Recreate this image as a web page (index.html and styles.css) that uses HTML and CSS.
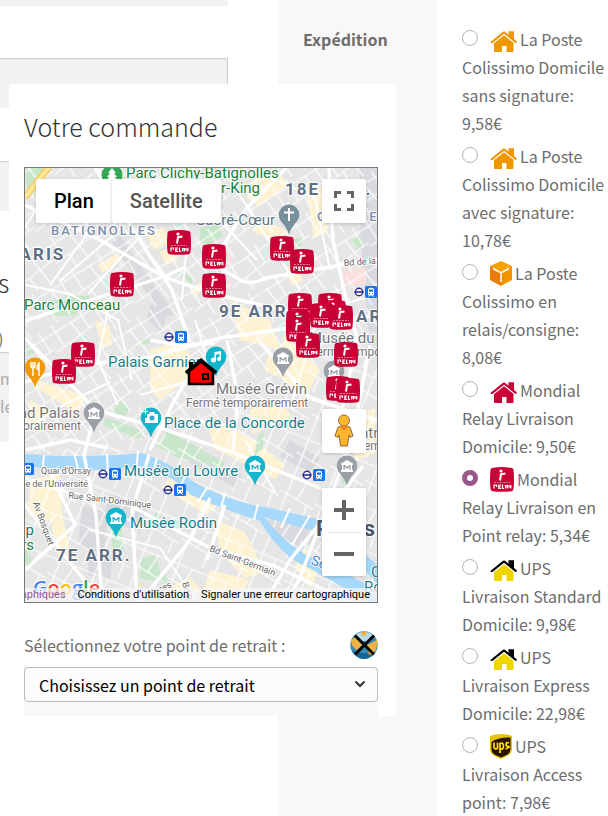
FILE: index.html
```html
<!DOCTYPE html>
<html lang="fr">
<head>
<meta charset="utf-8">
<title>Votre commande</title>
<meta name="viewport" content="width=device-width, initial-scale=1">
<link rel="stylesheet" href="styles.css">
</head>
<body>
<svg class="defs" aria-hidden="true">
  <symbol id="house" viewBox="0 0 27 21">
    <path class="roof" d="M1 10.500 13 .8q1-.8 2 0L18.500 3.800V.3H24V8L26.500 10Q27.500 11.500 25.500 12L14 2.800 2.500 12Q-.5 12.500 1 10.500Z"/>
    <path class="walls" d="M14 4.200 23.500 11.800V20Q23.500 21 22.500 21H16.500V15H12V21H5Q4 21 4 20V12.200Z"/>
  </symbol>
  <symbol id="relay" viewBox="0 0 24 25">
    <path fill="#c90036" d="M2 1Q12 -.8 22 1Q23.500 1.300 23.500 3Q24.500 12.500 23.500 22Q23.300 24 21.500 24.200Q12 25.500 2.500 24.200Q.7 24 .5 22Q-.5 12.500 .5 3Q.6 1.300 2 1Z"/>
    <circle cx="11" cy="4" r="1.600" fill="#fff"/>
    <path d="M15.500 6.500 11 7.200 10 13.500" fill="none" stroke="#fff" stroke-width="2"/>
    <path d="M4 15.500H20" stroke="#e87d9a" stroke-dasharray="2 1"/>
    <path d="M4 21.500V18H6.500V20M8.800 21.500V18H11M8.800 19.800H10.500M8.300 21.500H11M12.500 17.500V21.500H14M15.500 21.500V18.500H17.500V21.500M15.500 20H17.500M19 18V20H20.800V17.800M20.800 19.500V21.500" fill="none" stroke="#fff" stroke-width="1.200"/>
  </symbol>
  <symbol id="train" viewBox="0 0 26 12">
    <circle cx="6" cy="6" r="3.700" fill="#fff" stroke="#2b2f8f" stroke-width="1.400"/>
    <path d="M1.500 6H10.500" stroke="#2b2f8f" stroke-width="1.600"/>
    <use href="#tram" x="12" width="12" height="12"/>
  </symbol>
  <symbol id="tram" viewBox="0 0 12 12">
    <rect width="12" height="12" rx="1.500" fill="#1a73e8"/>
    <path fill="#fff" d="M3 3.500Q3 1.800 6 1.800T9 3.500V8Q9 9 8 9L9 10.500H7.800L7 9.500H5L4.200 10.500H3L4 9Q3 9 3 8Z"/>
    <path fill="#1a73e8" d="M4 3.500H8V5.800H4ZM4 7H5V8H4ZM7 7H8V8H7Z"/>
  </symbol>
  <symbol id="pin" viewBox="0 0 22 31">
    <path d="M11 .5A10.300 10.300 0 0 0 .7 10.800C.7 18 8 20 11 30.500C14 20 21.300 18 21.300 10.800A10.300 10.300 0 0 0 11 .5Z"/>
  </symbol>
  <symbol id="museum" viewBox="0 0 12 12">
    <path fill="#fff" fill-rule="evenodd" d="M6 0 12 3.500V4.800H11V10H12V12H0V10H1V4.800H0V3.500ZM2.500 5V10H3.700V7L6 9 8.300 7V10H9.500V5H8.300L6 7.200 3.700 5Z"/>
  </symbol>
</svg>

<main class="page">
  <form class="billing">
    <div class="field field-cut"></div>
    <div class="field"></div>
    <div class="field"></div>
    <h3 class="heading">s</h3>
    <p class="note">)</p>
    <div class="comments">m<br>le</div>
  </form>

  <table class="order">
    <tbody>
      <tr>
        <th scope="row">Expédition</th>
        <td>
          <ul class="methods">
            <li><input type="radio" name="shipping" id="m1"><label for="m1"><svg class="icon house orange"><use href="#house"/></svg>La Poste Colissimo Domicile sans signature: 9,58€</label></li>
            <li><input type="radio" name="shipping" id="m2"><label for="m2"><svg class="icon house orange"><use href="#house"/></svg>La Poste Colissimo Domicile avec signature: 10,78€</label></li>
            <li><input type="radio" name="shipping" id="m3"><label for="m3"><svg class="icon box" viewBox="0 0 22 25"><path fill="#f6a200" d="M11 0 22 5 11 11 0 5Z"/><path fill="#ed7d00" d="M0 5 11 11V25L0 19Z"/><path fill="#f39200" d="M22 5 11 11V25L22 19Z"/><path d="M3 7.500 11 12 19 7.500M11 12V21" fill="none" stroke="#fff" stroke-width="1.500"/></svg>La Poste Colissimo en relais/consigne: 8,08€</label></li>
            <li><input type="radio" name="shipping" id="m4"><label for="m4"><svg class="icon house crimson"><use href="#house"/></svg>Mondial Relay Livraison Domicile: 9,50€</label></li>
            <li><input type="radio" name="shipping" id="m5" checked><label for="m5"><svg class="icon relay"><use href="#relay"/></svg>Mondial Relay Livraison en Point relay: 5,34€</label></li>
            <li><input type="radio" name="shipping" id="m6"><label for="m6"><svg class="icon house yellow"><use href="#house"/></svg>UPS Livraison Standard Domicile: 9,98€</label></li>
            <li><input type="radio" name="shipping" id="m7"><label for="m7"><svg class="icon house yellow"><use href="#house"/></svg>UPS Livraison Express Domicile: 22,98€</label></li>
            <li><input type="radio" name="shipping" id="m8"><label for="m8"><svg class="icon box" viewBox="0 0 22 25"><path fill="#e2c400" d="M0 2Q11 -2 22 2V15Q22 20 17 22L11 25 5 22Q0 20 0 15Z"/><path fill="#2a1206" d="M1.500 8Q8 3 20.500 3.500V15Q20.500 19 16.500 21L11 23.500 5.500 21Q1.500 19 1.500 15Z"/><path d="M4 8.500V13Q4 15.500 7.500 14.500V8.500M10 19V9.500Q13.500 8 13.500 12T10 15M19 9Q16 8 16 10.200T18.500 12.500T15.500 15" fill="none" stroke="#ffe100" stroke-width="1.700"/></svg>UPS Livraison Access point: 7,98€</label></li>
          </ul>
        </td>
      </tr>
    </tbody>
  </table>
</main>

<section class="dialog" aria-labelledby="dialog-title">
  <h2 class="heading" id="dialog-title">Votre commande</h2>
  <div class="map">
    <svg class="canvas" viewBox="25 168 352 434" preserveAspectRatio="xMidYMid slice">
      <defs>
        <pattern id="streets" width="46" height="38" patternUnits="userSpaceOnUse" patternTransform="rotate(-32)">
          <path d="M0 7H46M0 25 46 21M9 0V25M27 6 31 38M40 0V22M16 24V38" fill="none" stroke="#fff" stroke-width="1.200"/>
        </pattern>
        <pattern id="streets2" width="37" height="41" patternUnits="userSpaceOnUse" patternTransform="rotate(22)">
          <path d="M0 5H37M0 21 37 27M7 0V41M22 5 18 25M30 26V41" fill="none" stroke="#fff" stroke-width="1.200"/>
        </pattern>
      </defs>
      <rect x="25" y="168" width="352" height="434" fill="#e6e6e6"/>
      <g fill="#fdf3d3">
        <path d="M98 265l20-12 4 6-20 14zM145 232l18-4 8 14-17 8zM190 292l9-10 5 6-9 9zM252 180l25-8 12 12-30 22-12-8zM260 218l26 12-5 12-28-10zM305 183l18 4 5 45-14 6zM285 268l10-5 8 18-12 4zM360 212l17-6v14l-14 4zM95 320l14 5 3 20-10 2zM36 380l50 16-8 18-45-28zM150 350l30-10 20 30-40 30-10-10zM230 300l40 20 10 30-40-10zM250 410l30-12 12 20-40 16zM285 335l35 35-15 28-30-25zM205 418l50 22 30 25-10 14-60-30zM345 418l30-10v45l-20 8zM30 400l20 10-10 20-15-5zM30 480l30-6 2 40-20 10-14-10zM50 520l12-8 8 40-12 4zM170 478l45 28-8 9-46-28zM215 520l30 12 20 40-20 6-25-25zM210 570l40 10-15 22h-35zM305 545l14 25-9 18-15-20zM160 592l30-15 12 14-25 11zM295 460l22 8-10 8zM160 252l12-5 6 14-12 4zM268 352l15 5-3 20-15-6zM350 270l22-4v20z"/>
      </g>
      <g fill="#d9dadd">
        <path d="M120 235 175 315 163 317 112 243zM359 168H377V345H369L360 230zM182 448l60 26-6 14-45-24zM82 506l27 6-6 42-25-8zM110 494l38 12-9 28-35-20zM290 440l30 18-10 14-30-15zM152 302l16 12-7 18-15-14zM265 520l28-4 24 22-18 17zM88 550l25 5-3 25-22-5z"/>
      </g>
      <path fill="#fbdfdd" d="M342 270 366 268 366 284 346 286Z"/>
      <g fill="#c8e6c9">
        <path d="M25 168h22l-20 22zM50 301l20-6 12 8-6 12-24 1zM200 228l18-4 5 12-14 9-9-4zM66 296h24v8H66zM112 413l8-12 10 6-6 12zM105 417l38 14-3 8-36-14zM156 447l11-16 37 19 2 13-30-6-21-12zM205 452l20 10-4 8-20-12zM112 525h9l3 25-12-2zM141 558l15-3 4 18 9 3-4 7-25-5zM147 522l9-10 6 4-9 12zM258 436l6-5-1 17-9 8zM352 240l8-5 3 11-6 3zM292 240l9-3 1 9-9 2zM26 345l10 7-8 4zM140 339h9v5h-9zM340 470l8 10-5 5zM172 267l22 12-3 5zM25 545l8 20-8 5z"/>
      </g>
      <path fill="url(#streets)" d="M25 168H377V330L200 430 25 455Z"/>
      <path fill="url(#streets2)" d="M25 455 200 430 377 330V602H25Z"/>
      <path d="M25 454Q85 459 142 453Q170 462 194 482Q228 502 270 508L330 522 377 565V583L332 536 264 517Q294 554 320 560L377 590V602H369L309 568Q282 558 260 521Q220 508 191 495Q164 468 139 466Q90 474 25 466Z" fill="#a5d8fb"/>
      <g fill="none" stroke="#fff" stroke-width="3.400">
        <path d="M25 321 58 310 116 292 166 276 185 267M220 268 242 281Q252 285 266 278L318 269 377 259M25 382 75 366 150 357 220 338 290 328 377 315M151 340Q180 347 214 343"/>
        <path d="M95 168 120 210 172 290 190 342M25 205 100 240 166 278 222 296 292 312M329 168 333 240 345 295 357 338 340 420M25 338 96 410 160 428 232 452 320 488M96 410 84 455 96 515 102 602M150 450 172 405 186 380M26 450 70 440 108 448"/>
        <path d="M25 478 70 493 129 505 210 548 275 566 350 602M149 455 132 510 137 602M210 498 190 540 140 602M225 505 207 560M370 345 352 440 299 580 285 602M227 340 238 398 233 450M222 248 245 210 286 168M25 505 92 590M49 470 75 525 25 570M265 602 290 560 316 528 363 466M260 342 310 398 377 420"/>
      </g>
      <g fill="none" stroke="#fff" stroke-width="2">
        <path d="M44 455 42 475M74 453 79 473M107 454 108 475M138 450 136 475M157 458 151 480M186 475 177 492M207 488 198 502M225 493 221 508M258 504 254 520M290 508 281 528M310 515 292 545"/>
        <path d="M49 190 25 227M60 180 90 230 50 285M125 225 60 281M150 225 88 294M25 285 70 294 118 320 132 380M205 205 257 260M230 180 300 290M195 320 212 375 140 395M250 168 315 198 330 270M377 295 320 310 292 402M110 300 98 360 118 405M150 168 188 230 182 300M90 530 160 548 195 600M245 440 275 492M180 418 225 425M25 430 65 404 110 382"/>
      </g>
      <path d="M25 197 49 167" stroke="#f3cb63" stroke-width="7"/>
      <path d="M25 197 49 167" stroke="#ffe799" stroke-width="4"/>

      <g class="place">
        <g class="green">
          <text x="126" y="178">Parc Clichy-Batignolles</text>
          <text x="260" y="193" text-anchor="end">Martin Luther-King</text>
          <text x="24" y="310">Parc Monceau</text>
          <text x="34" y="535" text-anchor="end">Champ</text>
          <text x="34" y="550" text-anchor="end">de Mars</text>
        </g>
        <text class="slate" x="275" y="225" text-anchor="end">Sacré-Cœur</text>
        <g class="teal">
          <text x="108" y="367">Palais Garnier</text>
          <text x="164" y="428">Place de la Concorde</text>
          <text x="124" y="476">Musée du Louvre</text>
          <text x="130" y="528">Musée Rodin</text>
          <text x="371" y="577">Co</text>
          <text x="364" y="592">Rol</text>
        </g>
        <g class="grey">
          <text x="216" y="394">Musée Grévin</text>
          <text x="309" y="343">Musée du C</text>
          <text x="80" y="418" text-anchor="end">Grand Palais</text>
          <text x="360" y="438">ntre</text>
          <g class="small">
            <text x="186" y="407">Fermé temporairement</text>
            <text x="310" y="356">Fermé tempor</text>
            <text x="81" y="430" text-anchor="end">Fermé temporairement</text>
            <text x="364" y="450">empo</text>
          </g>
        </g>
      </g>
      <g class="district">
        <text x="285" y="195">18E ARR.</text>
        <text x="8" y="260">PARIS</text>
        <text x="219" y="317">9E ARR.</text>
        <text x="356" y="322">ARR.</text>
        <text x="56" y="561">7E ARR.</text>
      </g>
      <text class="city" x="316" y="536">Paris</text>
      <g class="quarter">
        <text x="51" y="235">BATIGNOLLES</text>
        <text x="317" y="221">GOUTTE</text>
      </g>
      <g class="street">
        <text x="344" y="266" transform="rotate(-4 344 266)">Bd de la Chapelle</text>
        <text x="41" y="474">Quai d'Orsay</text>
        <text x="88" y="487" text-anchor="end">Rue de l'Université</text>
        <text x="68" y="498" transform="rotate(7 68 498)">Rue Saint-Dominique</text>
        <text x="33" y="503" transform="rotate(70 33 503)">Av Bosquet</text>
        <text x="209" y="551" transform="rotate(21 209 551)">Bd Saint-Germain</text>
        <text x="182" y="583" transform="rotate(75 182 583)">Bd R</text>
        <text x="148" y="598" transform="rotate(-25 148 598)">Sèvres</text>
      </g>
      <text class="water" x="310" y="564" transform="rotate(20 310 564)">Seine</text>

      <use href="#train" x="163" y="331" width="26" height="12"/>
      <use href="#train" x="353" y="286" width="26" height="12"/>
      <use href="#train" x="97" y="468" width="26" height="12"/>
      <use href="#train" x="162" y="484" width="26" height="12"/>
      <use href="#train" x="301" y="469" width="26" height="12"/>
      <use href="#tram" x="22" y="463" width="12" height="12"/>

      <circle cx="112" cy="175" r="10.500" fill="#34a853"/>
      <path fill="#fff" d="M112 168l4 5h-2l3 4h-2l3 4h-5v3h-2v-3h-5l3-4h-2l3-4h-2z"/>
      <g fill="#78909c"><use href="#pin" x="278" y="204" width="22" height="31"/></g>
      <path d="M289 208V221M284 212.500H294" stroke="#fff" stroke-width="2"/>
      <g fill="#12b5cb">
        <use href="#pin" x="205" y="346" width="22" height="31"/>
        <use href="#pin" x="140" y="407" width="22" height="31"/>
        <use href="#pin" x="244" y="455" width="22" height="31"/>
        <use href="#pin" x="105" y="507" width="22" height="31"/>
      </g>
      <g fill="#9aa0a6">
        <use href="#pin" x="272" y="347" width="22" height="31"/>
        <use href="#pin" x="323" y="360" width="22" height="31"/>
        <use href="#pin" x="83" y="402" width="22" height="31"/>
        <use href="#pin" x="336" y="455" width="22" height="31"/>
      </g>
      <g fill="#f29900"><use href="#pin" x="24" y="357" width="22" height="31"/></g>
      <path d="M31 362V366Q31 368 33 368V376M35 362V366Q35 368 33 368V362M39 376V363Q37 365 37 369H39" fill="none" stroke="#fff" stroke-width="1.500"/>
      <g fill="#fff">
        <circle cx="213.500" cy="360" r="2.500"/><circle cx="219" cy="359" r="2"/>
        <path d="M214.500 352 221 351V359H219.500V354L216 354.500V360H214.500Z"/>
        <path d="M147 414h2l1-2h4l1 2h3v9h-13v-5h2zM143 411h2v-2h1v2h2v1h-2v2h-1v-2h-2z"/>
      </g>
      <circle cx="152" cy="418" r="2.500" fill="#12b5cb"/>
      <use href="#museum" x="249" y="460" width="12" height="12"/>
      <use href="#museum" x="110" y="512" width="12" height="12"/>
      <use href="#museum" x="277" y="352" width="12" height="12"/>
      <use href="#museum" x="328" y="365" width="12" height="12"/>
      <use href="#museum" x="88" y="407" width="12" height="12"/>
      <use href="#museum" x="341" y="460" width="12" height="12"/>

      <g class="markers">
        <use href="#relay" x="167" y="230" width="24" height="25"/>
        <use href="#relay" x="202" y="244" width="24" height="25"/>
        <use href="#relay" x="202" y="273" width="24" height="25"/>
        <use href="#relay" x="110" y="272" width="24" height="25"/>
        <use href="#relay" x="270" y="236" width="24" height="25"/>
        <use href="#relay" x="290" y="249" width="24" height="25"/>
        <use href="#relay" x="71" y="342" width="24" height="25"/>
        <use href="#relay" x="52" y="359" width="24" height="25"/>
        <use href="#relay" x="288" y="293" width="24" height="25"/>
        <use href="#relay" x="318" y="293" width="24" height="25"/>
        <use href="#relay" x="286" y="310" width="24" height="25"/>
        <use href="#relay" x="286" y="317" width="24" height="25"/>
        <use href="#relay" x="322" y="300" width="24" height="25"/>
        <use href="#relay" x="310" y="303" width="24" height="25"/>
        <use href="#relay" x="329" y="305" width="24" height="25"/>
        <use href="#relay" x="296" y="333" width="24" height="25"/>
        <use href="#relay" x="334" y="342" width="24" height="25"/>
        <use href="#relay" x="326" y="376" width="24" height="25"/>
        <use href="#relay" x="336" y="378" width="24" height="25"/>
      </g>
      <path d="M189 371 201 361 213 371V384H189Z" fill="#f00" stroke="#000" stroke-width="2.500"/>
      <path d="M191 362V368M186 373 201 360.500 216 373" fill="none" stroke="#000" stroke-width="4"/>
      <path fill="#000" d="M202 373h7v7h-7z"/>
      <path fill="#f00" d="M204 375h3v3h-3z"/>
      <text class="brand" x="33" y="595"><tspan fill="#4285f4">G</tspan><tspan fill="#ea4335">o</tspan><tspan fill="#fbbc05">o</tspan><tspan fill="#4285f4">g</tspan><tspan fill="#34a853">l</tspan><tspan fill="#ea4335">e</tspan></text>
    </svg>

    <div class="controls">
      <div class="types">
        <button type="button" class="active">Plan</button>
        <button type="button">Satellite</button>
      </div>
      <div class="tools">
        <button type="button" aria-label="Plein écran"><svg width="20" height="20" viewBox="0 0 20 20"><path d="M1.500 7V1.500H7M13 1.500H18.500V7M18.500 13V18.500H13M7 18.500H1.500V13" fill="none" stroke="#666" stroke-width="3"/></svg></button>
        <button type="button" class="pegman" aria-label="Street View"><svg width="20" height="34" viewBox="0 0 20 34"><g fill="#fbb62c" stroke="#8a6d3b"><path d="M4 13Q10 10 16 13L19 22 16 23.500 15 21 13.500 32H6.500L5 21 4 23.500 1 22Z"/><circle cx="10" cy="6.500" r="5.500"/></g><path fill="#e8862e" d="M5 12Q10 11 15 12L10 17Z"/></svg></button>
        <div class="zoom">
          <button type="button" aria-label="Zoom avant"><svg width="20" height="20"><path d="M0 10H20M10 0V20" stroke="#666" stroke-width="4"/></svg></button>
          <button type="button" aria-label="Zoom arrière"><svg width="20" height="20"><path d="M0 10H20" stroke="#666" stroke-width="4"/></svg></button>
        </div>
      </div>
    </div>
    <div class="legal"><span class="visited">Données cartographiques</span><a href="#">Conditions d'utilisation</a><a href="#">Signaler une erreur cartographique</a></div>
  </div>

  <div class="pick">
    <label for="point">Sélectionnez votre point de retrait :</label>
    <svg width="28" height="28" viewBox="0 0 28 28"><circle cx="14" cy="14" r="13.700" fill="#3989b5"/><path fill="#b9dbe8" d="M5 4Q14-3 23 4L20 10H8Z"/><path fill="#176592" d="M2 20Q14 24 25 21Q18 31 9 27Z"/><path fill="#efb044" d="M1 9Q5 5 9 7L12 14 7 19Q1 16 1 9ZM17 14 27 9Q28 18 23 23L19 24ZM11 1H17L15 5H12Z"/><path d="M5 4.500 24 23.500M24 4.500 5 23.500" stroke="#080808" stroke-width="3"/></svg>
  </div>
  <div class="choice">
    <select id="point"><option>Choisissez un point de retrait</option></select>
    <svg class="chevron" width="12" height="8" viewBox="0 0 12 8"><path d="M1.500 1.500 6 6 10.500 1.500" fill="none" stroke="#333" stroke-width="2"/></svg>
  </div>
</section>
</body>
</html>
```
FILE: styles.css
```css
* {
  box-sizing: border-box;
}

body {
  margin: 0;
  height: 100vh;
  overflow: hidden;
  position: relative;
  background: #fff;
  color: #6d6d6d;
  font: 16px/28px "Noto Sans CJK JP", "Open Sans", sans-serif;
}

.defs {
  position: absolute;
  width: 0;
  height: 0;
}

.page {
  display: grid;
  grid-template-columns: 228px 1fr;
  column-gap: 50px;
  height: 100%;
}

/* Billing form behind the dialog */
.billing {
  overflow: hidden;
}

.field {
  height: 50px;
  margin-bottom: 53px;
  background: #f2f2f2;
  box-shadow: inset -1px 1px 1px #ccc;
}

.field-cut {
  height: 6px;
  margin-bottom: 52px;
  box-shadow: none;
}

.heading {
  margin: 0;
  color: #333;
  font-size: 25px;
  font-weight: 300;
  line-height: 36px;
}

.billing .heading {
  margin: 8px 0 24px -2px;
}

.note {
  margin: 0 0 0 -2px;
}

.comments {
  width: 200px;
  height: 90px;
  padding-top: 12px;
  background: #f2f2f2;
  box-shadow: inset 0 1px 1px #ccc;
  color: #aaa;
}

/* Order summary */
.order {
  width: 100%;
  height: 100%;
  border-collapse: collapse;
}

.order th {
  width: 159px;
  padding: 25px;
  background: #f8f8f8;
  font-weight: 700;
  text-align: left;
  vertical-align: top;
}

.order td {
  padding: 25px 0 0 25px;
  vertical-align: top;
}

.methods {
  display: grid;
  gap: 5px;
  margin: 0;
  padding: 0;
  list-style: none;
}

.methods input {
  appearance: none;
  width: 16px;
  height: 16px;
  margin: 0 12px 0 0;
  border: 1px solid #b4b4b4;
  border-radius: 50%;
  background: #fff;
  vertical-align: 0;
}

.methods input:checked {
  border: 5px solid #96588a;
}

.icon {
  margin-right: 3px;
}

.house {
  width: 27px;
  height: 21px;
  vertical-align: -6px;
}

.box {
  width: 22px;
  height: 25px;
  vertical-align: -6px;
  margin-top: -5px;
}

.relay {
  width: 24px;
  height: 25px;
  vertical-align: -6px;
  margin-top: -5px;
}

.orange {
  fill: #ef9700;
}

.crimson {
  fill: #c90036;
}

.yellow {
  --roof: #000;
  fill: #efd500;
}

.roof {
  fill: var(--roof, inherit);
}

/* Pick-up point dialog */
.dialog {
  position: absolute;
  top: 84px;
  left: 9px;
  right: 212px;
  padding: 24px 18px 0 15px;
  background: #fff;
}

.map {
  position: relative;
  height: 436px;
  margin-top: 23px;
  border: 1px solid #777;
  overflow: hidden;
  font-family: Roboto, sans-serif;
}

.canvas {
  display: block;
  width: 100%;
  height: 100%;
}

.canvas text {
  paint-order: stroke;
  stroke: #fff;
  stroke-width: 2px;
  stroke-linejoin: round;
}

.place {
  font-size: 15px;
}

.small {
  font-size: 12px;
}

.green {
  fill: #188038;
}

.slate {
  fill: #5d7783;
}

.teal {
  fill: #12808c;
}

.grey {
  fill: #757575;
}

.district {
  fill: #5f6f82;
  font-size: 17px;
  font-weight: 700;
  letter-spacing: 2px;
}

.city {
  fill: #4a5565;
  font-size: 22px;
  font-weight: 700;
  letter-spacing: 2px;
}

.quarter {
  fill: #7c8ca8;
  font-size: 13px;
  font-weight: 500;
  letter-spacing: 2px;
}

.street {
  fill: #666;
  font-size: 9px;
}

.water {
  fill: #4a87c7;
  font-size: 14px;
}

.brand {
  font-family: "Open Sans", sans-serif;
  font-size: 20px;
  font-weight: 600;
}

.controls {
  position: absolute;
  inset: 11px 11px 26px;
  display: flex;
  justify-content: space-between;
}

.controls button {
  display: flex;
  align-items: center;
  justify-content: center;
  width: 44px;
  height: 44px;
  padding: 0;
  border: 0;
  border-radius: 2px;
  background: #fff;
  box-shadow: 0 1px 4px -1px rgba(0, 0, 0, 0.3);
}

.types {
  display: flex;
}

.controls .types button {
  width: auto;
  padding: 0 18px;
  color: #565656;
  font: 500 20px/24px Roboto, sans-serif;
}

.controls .types .active {
  color: #000;
}

.tools {
  display: flex;
  flex-direction: column;
}

.controls .pegman {
  margin: auto 0 35px;
}

.zoom {
  border-radius: 2px;
  background: #fff;
  box-shadow: 0 1px 4px -1px rgba(0, 0, 0, 0.3);
}

.controls .zoom button {
  box-shadow: none;
}

.zoom button + button {
  background: linear-gradient(#e6e6e6, #e6e6e6) center top / 33px 1px no-repeat;
}

.legal {
  position: absolute;
  right: 0;
  bottom: 0;
  left: 0;
  display: flex;
  justify-content: flex-end;
  gap: 12px;
  padding-right: 7px;
  background: rgba(245, 245, 245, 0.75);
  font-size: 11px;
  line-height: 14px;
  white-space: nowrap;
}

.legal a {
  color: #000;
  text-decoration: none;
}

.visited {
  color: #93579b;
}

.pick {
  display: flex;
  align-items: center;
  justify-content: space-between;
  margin-top: 28px;
}

.choice {
  position: relative;
  margin-top: 8px;
  padding-bottom: 14px;
  background: #f8f8f8;
}

.choice select {
  display: block;
  width: 100%;
  height: 35px;
  padding: 0 14px;
  appearance: none;
  border: 1px solid #bbb;
  border-radius: 4px;
  background: #fcfcfc;
  color: #000;
  font: inherit;
}

.chevron {
  position: absolute;
  top: 13px;
  right: 12px;
  pointer-events: none;
}
```
